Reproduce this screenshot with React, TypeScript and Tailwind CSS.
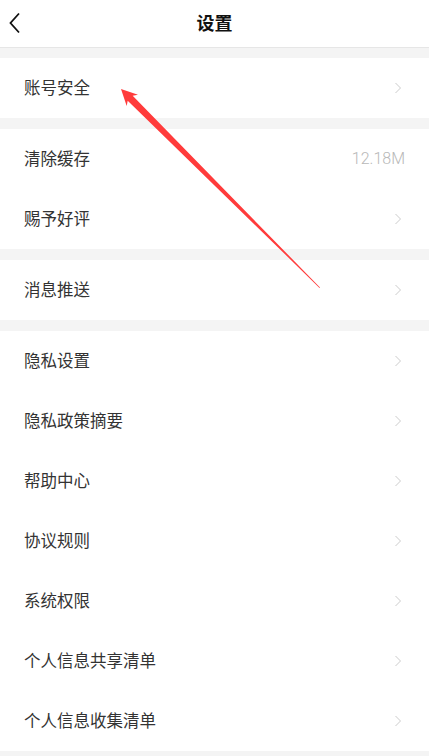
import React from "react";

const Chevron = () => (
  <svg width="8" height="12" viewBox="0 0 8 12" className="shrink-0">
    <path d="M1.5 1 L6.5 6 L1.5 11" fill="none" stroke="#cccccc" strokeWidth="1" />
  </svg>
);

const Row = ({ label, value }: { label: string; value?: string }) => (
  <div className="flex h-[60px] items-center justify-between bg-white pl-6 pr-[27px]">
    <span className="relative -top-[1px] text-[16.5px] text-[#333333]">{label}</span>
    {value ? (
      <span className="-mr-[3px] text-[16px] font-light text-[#b8b8b8] [font-family:Roboto,sans-serif]">{value}</span>
    ) : (
      <Chevron />
    )}
  </div>
);

const Gap = () => <div className="h-[11px] bg-[#f4f4f4]" />;

export default function App() {
  return (
    <div className="relative h-[756px] w-[429px] overflow-hidden bg-[#f4f4f4] [font-family:'Noto_Sans_CJK_SC',sans-serif]">
      <div className="relative flex h-[48px] items-center justify-center border-b border-[#e6e6e6] bg-white">
        <svg width="14" height="22" viewBox="0 0 14 22" className="absolute left-[8px] top-[12px]">
          <path d="M11 1.5 L2.5 11 L11 20.5" fill="none" stroke="#111111" strokeWidth="1.8" />
        </svg>
        <span className="relative -top-[1px] text-[18px] font-bold text-[#111111]">设置</span>
      </div>
      <div className="h-[10px] bg-[#f4f4f4]" />
      <Row label="账号安全" />
      <Gap />
      <Row label="清除缓存" value="12.18M" />
      <Row label="赐予好评" />
      <Gap />
      <Row label="消息推送" />
      <Gap />
      <Row label="隐私设置" />
      <Row label="隐私政策摘要" />
      <Row label="帮助中心" />
      <Row label="协议规则" />
      <Row label="系统权限" />
      <Row label="个人信息共享清单" />
      <Row label="个人信息收集清单" />
      <svg className="pointer-events-none absolute left-0 top-0" width="429" height="756" viewBox="0 0 429 756">
        <polygon
          points="121,89 138,94.7 132.7,95.7 320,287.5 319.5,287.9 127.7,100.7 126.7,106"
          fill="#ff3b3b"
        />
      </svg>
    </div>
  );
}
